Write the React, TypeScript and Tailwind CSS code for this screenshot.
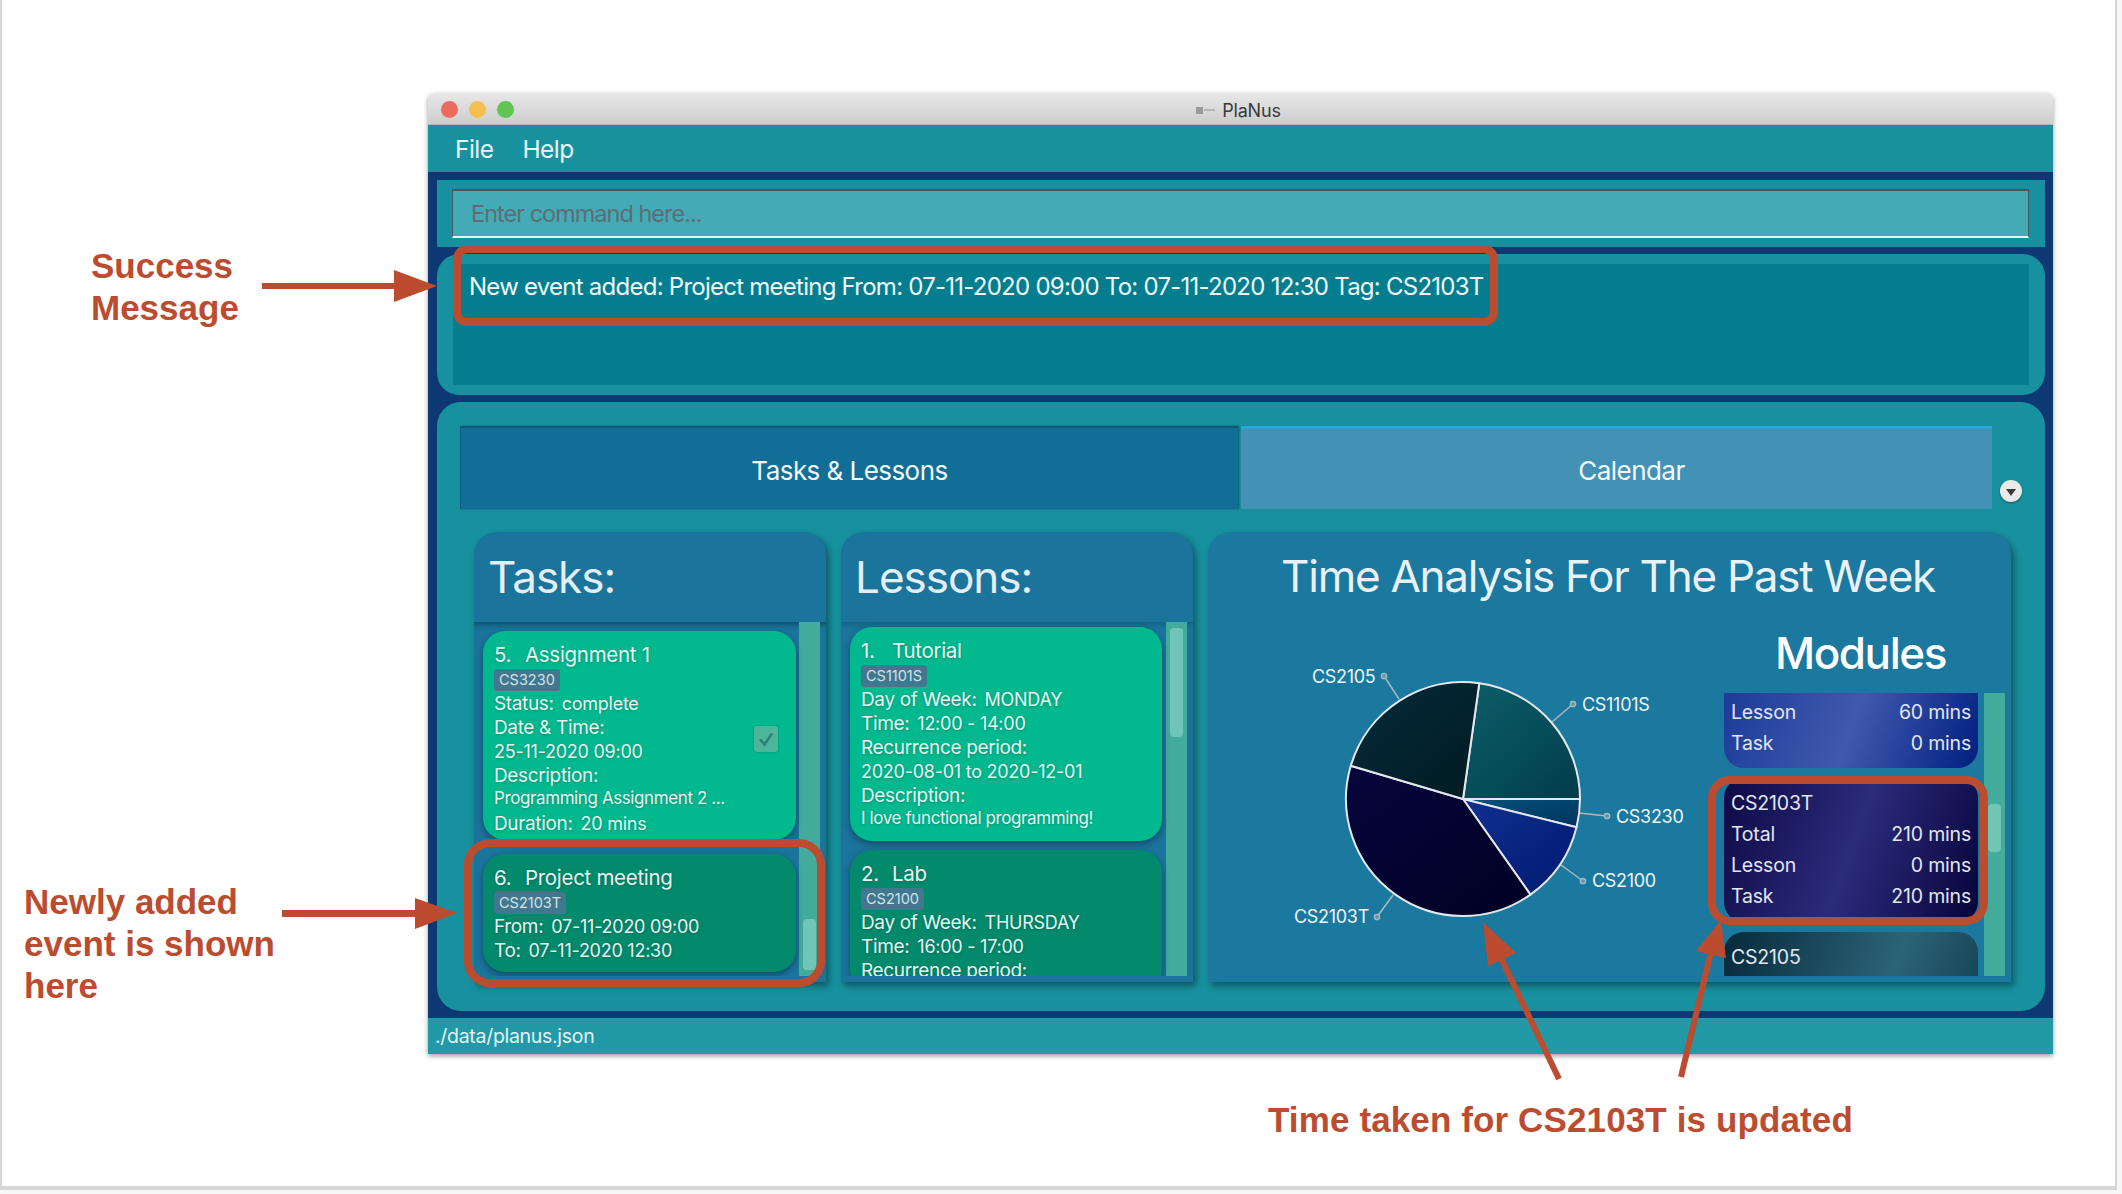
import React from "react";

const pieCx = 1462;
const pieCy = 799;
const pieR = 117;

const slices = [
  { id: "s1", from: 8, to: 90, c1: "#0b5f69", c2: "#023c4b" },
  { id: "s2", from: 90, to: 104, c1: "#05527f", c2: "#00345c" },
  { id: "s3", from: 104, to: 144.8, c1: "#10308f", c2: "#001970" },
  { id: "s4", from: 144.8, to: 286.5, c1: "#07063c", c2: "#000024" },
  { id: "s5", from: 286.5, to: 368, c1: "#052c3e", c2: "#011a20" },
];

const labels = [
  { text: "CS2105", x: 1311, y: 677, dot: [1383, 676], end: [1398, 699] },
  { text: "CS1101S", x: 1581, y: 705, dot: [1572, 704], end: [1551, 722] },
  { text: "CS3230", x: 1615, y: 817, dot: [1606, 816], end: [1578, 813] },
  { text: "CS2100", x: 1591, y: 881, dot: [1582, 881], end: [1560, 865] },
  { text: "CS2103T", x: 1293, y: 917, dot: [1376, 917], end: [1392, 895] },
];

const polar = (deg: number) => {
  const a = ((deg - 90) * Math.PI) / 180;
  return [pieCx + pieR * Math.cos(a), pieCy + pieR * Math.sin(a)];
};

const slicePath = (from: number, to: number) => {
  const [x1, y1] = polar(from);
  const [x2, y2] = polar(to);
  const large = to - from > 180 ? 1 : 0;
  return `M${pieCx} ${pieCy}L${x1} ${y1}A${pieR} ${pieR} 0 ${large} 1 ${x2} ${y2}Z`;
};

const PieChart = () => (
  <svg viewBox="1207 620 516 356" className="w-[516px] h-[356px] shrink-0">
    <defs>
      {slices.map((s) => (
        <linearGradient key={s.id} id={s.id} x1="0" y1="0" x2="1" y2="1">
          <stop offset="0" stopColor={s.c1} />
          <stop offset="1" stopColor={s.c2} />
        </linearGradient>
      ))}
    </defs>
    {labels.map((l) => (
      <g key={l.text}>
        <line x1={l.end[0]} y1={l.end[1]} x2={l.dot[0]} y2={l.dot[1]} stroke="#a9b8c0" strokeWidth="1.5" />
        <circle cx={l.dot[0]} cy={l.dot[1]} r="2.6" fill="#5d93a8" stroke="#a9b8c0" strokeWidth="1.5" />
        <text x={l.x} y={l.y + 6} fontSize="18" fill="#eef5f8" fontFamily="Inter, sans-serif" letterSpacing="-0.3">
          {l.text}
        </text>
      </g>
    ))}
    {slices.map((s) => (
      <path key={s.id} d={slicePath(s.from, s.to)} fill={`url(#${s.id})`} stroke="#e4e8ec" strokeWidth="2" strokeLinejoin="round" />
    ))}
  </svg>
);

const Tag = ({ text }: { text: string }) => (
  <div className="h-6 flex items-center pt-[1px]">
    <span className="h-[22px] px-[5px] flex items-center rounded-[3px] bg-[#41788f] text-[14.5px] text-[#d3e2e8] [text-shadow:none]">
      {text}
    </span>
  </div>
);

const Row = ({ label, value, small }: { label?: string; value?: string; small?: boolean }) => (
  <div className="h-6 flex items-center whitespace-nowrap">
    {label && <span className="mt-[2px] text-[19px] tracking-[-0.35px]">{label}</span>}
    {value && (
      <span className={(small ? "text-[17px] tracking-[-0.4px]" : "text-[18px] tracking-[-0.25px]") + (label ? " ml-[8px]" : "")}>
        {value}
      </span>
    )}
  </div>
);

const Card = ({ num, title, tag, dark, tight, children }: { num: string; title: string; tag: string; dark?: boolean; tight?: boolean; children: React.ReactNode }) => (
  <div
    className={
      "relative shrink-0 rounded-[22px] pt-[13px] pl-[11px] text-[#e6f6f1] [text-shadow:0_1px_3px_rgba(0,0,0,0.22)] shadow-[0_3px_7px_rgba(0,0,0,0.35)] " +
      (tight ? "pb-[5px] " : "pb-[10px] ") +
      (dark ? "bg-[#03896c]" : "bg-[#02b88f]")
    }
  >
    <div className="h-[23px] flex items-center text-[20.5px] tracking-[-0.3px] whitespace-nowrap">
      <span className="w-[31px]">{num}</span>
      <span>{title}</span>
    </div>
    <Tag text={tag} />
    {children}
  </div>
);

const Scrollbar = ({ thumbTop, thumbHeight }: { thumbTop: string; thumbHeight: string }) => (
  <div className={"w-[21px] shrink-0 bg-[#42ab9c] flex flex-col items-center " + thumbTop}>
    <div className={"w-[13px] rounded-[4px] bg-[#70c6b6] " + thumbHeight} />
  </div>
);

const ListPanel = ({ title, children }: { title: string; children: React.ReactNode }) => (
  <div className="w-[352px] shrink-0 flex flex-col rounded-t-[22px] bg-[#1a749c] shadow-[3px_4px_7px_rgba(0,0,0,0.4)] pb-[6px]">
    <div className="h-[90px] shrink-0 pt-[19px] pl-[14px] text-[44px] leading-[52px] text-[#e4eef5] tracking-[-1px]">{title}</div>
    {children}
  </div>
);

const ModuleRows = ({ rows }: { rows: [string, string][] }) => (
  <>
    {rows.map(([k, v]) => (
      <div key={k} className="flex justify-between h-[31px]">
        <span>{k}</span>
        <span>{v}</span>
      </div>
    ))}
  </>
);

const moduleText = "shrink-0 w-[254px] px-[7px] text-[19.5px] leading-[31px] text-[#e2e7f0] tracking-[-0.2px] ";

const App = () => {
  return (
    <div className="relative w-[2122px] h-[1194px] bg-[#f7f7f7] overflow-hidden [font-family:Inter,sans-serif]">
      <div className="w-[2117px] h-[1190px] bg-white border-l-2 border-r-2 border-b-4 border-[#d6d6d6] pl-[426px] pt-[93px]">
        {/* app window */}
        <div className="w-[1625px] h-[961px] flex flex-col rounded-t-[6px] overflow-hidden shadow-[0_2px_5px_rgba(0,0,0,0.4)]">
          <div className="relative h-[32px] shrink-0 flex items-center justify-center bg-gradient-to-b from-[#e8e8e8] to-[#cdcdcd] border-b border-[#b5b5b5]">
            <div className="absolute left-[13px] top-[8px] flex gap-[11px]">
              <div className="w-[17px] h-[17px] rounded-full bg-[#ed6a5e]" />
              <div className="w-[17px] h-[17px] rounded-full bg-[#f5bf4f]" />
              <div className="w-[17px] h-[17px] rounded-full bg-[#61c554]" />
            </div>
            <div className="flex items-center gap-[7px] text-[18px] text-[#3a3a3a] tracking-[-0.2px] ml-[-4px] mt-[3px]">
              <div className="flex items-center gap-[1px]">
                <div className="w-[7px] h-[7px] bg-[#9a9a9a]" />
                <div className="w-[11px] h-[2px] bg-[#b5b5b5]" />
              </div>
              PlaNus
            </div>
          </div>
          <div className="h-[47px] shrink-0 flex items-center gap-[29px] pl-[27px] pt-[2px] bg-[#18919f] text-[24.5px] text-[#e9f6f8] tracking-[-0.55px]">
            <span>File</span>
            <span>Help</span>
          </div>

          <div className="flex-1 flex flex-col bg-[#0d3872] pl-[9px] pr-2 pt-2 pb-[7px] gap-[7px]">
            {/* command box */}
            <div className="h-[67px] shrink-0 bg-[#17919f] pl-[15px] pr-4 pt-[9px]">
              <div className="h-[49px] flex items-center pl-[18px] bg-[#42abb5] border-t-2 border-l border-r border-[#44585f] border-b-2 border-b-[#e4f6f8] text-[23.5px] text-[#5f6d75] tracking-[-1px]">
                Enter command here...
              </div>
            </div>

            {/* result display */}
            <div className="h-[141px] shrink-0 rounded-[22px] bg-[#17919f] px-4 py-[10px]">
              <div className="h-[121px] bg-[#047e8f] pl-[16px] pt-[8px] text-[24px] leading-[30px] text-[#f0fafb] tracking-[-0.75px] whitespace-nowrap">
                New event added: Project meeting From: 07-11-2020 09:00 To: 07-11-2020 12:30 Tag: CS2103T
              </div>
            </div>

            {/* main panel */}
            <div className="flex-1 flex flex-col rounded-[24px] bg-[#17919f] pt-[24px]">
              <div className="flex pl-[23px] h-[83px] shrink-0">
                <div className="w-[778px] flex items-center justify-center pt-[3px] bg-[#116e96] border-t-2 border-l border-[#0c5a7c] shadow-[1px_0_2px_rgba(0,0,0,0.4)] text-[26px] text-[#f2f8fb] tracking-[-0.55px]">
                  Tasks &amp; Lessons
                </div>
                <div className="ml-[3px] w-[751px] flex items-center justify-center pl-[30px] pt-[3px] bg-[#4392b5] border-t-[3px] border-[#2aa5dc] text-[26px] text-[#f2f8fb] tracking-[-0.55px]">
                  Calendar
                </div>
                <div className="ml-[8px] mt-[54px] w-[22px] h-[22px] rounded-full bg-[#e9eaea] shadow-[0_1px_2px_rgba(0,0,0,0.4)] flex items-center justify-center">
                  <div className="w-0 h-0 mt-[2px] border-x-[5px] border-x-transparent border-t-[7px] border-t-[#3b3b3b]" />
                </div>
              </div>

              <div className="flex pl-[37px] pt-[23px] gap-[15px]">
                <ListPanel title="Tasks:">
                  <div className="h-[354px] flex overflow-hidden shadow-[inset_0_7px_6px_-5px_rgba(0,0,0,0.4)]">
                    <div className="w-[325px] shrink-0 pl-[9px] pr-[3px] pt-[9px] flex flex-col gap-[14px]">
                      <Card num="5." title="Assignment 1" tag="CS3230" tight>
                        <Row label="Status:" value="complete" />
                        <Row label="Date & Time:" />
                        <Row value="25-11-2020 09:00" />
                        <Row label="Description:" />
                        <Row value="Programming Assignment 2 ..." small />
                        <Row label="Duration:" value="20 mins" />
                        <div className="absolute left-[271px] top-[95px] w-[24px] h-[26px] rounded-[3px] bg-[#4db59b] shadow-[0_0_2px_rgba(0,0,0,0.3)] flex items-center justify-center">
                          <svg viewBox="0 0 24 26" className="w-[24px] h-[26px]">
                            <path d="M6 13.5l4.5 5L18 7.5" fill="none" stroke="#2b7f78" strokeWidth="2.4" />
                          </svg>
                        </div>
                      </Card>
                      <Card num="6." title="Project meeting" tag="CS2103T" dark>
                        <Row label="From:" value="07-11-2020 09:00" />
                        <Row label="To:" value="07-11-2020 12:30" />
                      </Card>
                    </div>
                    <Scrollbar thumbTop="pt-[297px]" thumbHeight="h-[51px]" />
                  </div>
                </ListPanel>

                <ListPanel title="Lessons:">
                  <div className="h-[354px] flex overflow-hidden shadow-[inset_0_7px_6px_-5px_rgba(0,0,0,0.2)]">
                    <div className="w-[325px] shrink-0 pl-[9px] pr-[4px] pt-[5px] flex flex-col gap-[9px]">
                      <Card num="1." title="Tutorial" tag="CS1101S">
                        <Row label="Day of Week:" value="MONDAY" />
                        <Row label="Time:" value="12:00 - 14:00" />
                        <Row label="Recurrence period:" />
                        <Row value="2020-08-01 to 2020-12-01" />
                        <Row label="Description:" />
                        <Row value="I love functional programming!" small />
                      </Card>
                      <Card num="2." title="Lab" tag="CS2100" dark>
                        <Row label="Day of Week:" value="THURSDAY" />
                        <Row label="Time:" value="16:00 - 17:00" />
                        <Row label="Recurrence period:" />
                      </Card>
                    </div>
                    <Scrollbar thumbTop="pt-[6px]" thumbHeight="h-[109px]" />
                  </div>
                </ListPanel>

                {/* time analysis */}
                <div className="w-[803px] h-[450px] shrink-0 flex flex-col rounded-t-[22px] bg-[#1b789e] shadow-[3px_4px_7px_rgba(0,0,0,0.4)] pb-[6px]">
                  <div className="h-[88px] shrink-0 pt-[18px] text-center text-[44px] leading-[52px] text-[#e8f1f6] tracking-[-1.27px] pr-[3px]">
                    Time Analysis For The Past Week
                  </div>
                  <div className="flex flex-1 min-h-0">
                    <PieChart />
                    <div className="w-[281px] flex flex-col">
                      <div className="h-[73px] shrink-0 text-center text-[44px] leading-[66px] font-medium text-white tracking-[-1.4px] pr-[8px]">Modules</div>
                      <div className="h-[283px] flex overflow-hidden">
                        <div className="w-[260px] shrink-0 flex flex-col gap-[10px]">
                          {/* list is scrolled, so the first card only shows its last rows */}
                          <div className={moduleText + "h-[75px] pt-[4px] rounded-b-[20px] bg-[linear-gradient(110deg,#1c3c98,#4059ae_50%,#001f80)]"}>
                            <ModuleRows rows={[["Lesson", "60 mins"], ["Task", "0 mins"]]} />
                          </div>
                          <div className={moduleText + "h-[144px] pt-[10px] rounded-[20px] bg-[linear-gradient(110deg,#0c0a45,#2b2b7b_50%,#06043a)]"}>
                            <div className="h-[31px]">CS2103T</div>
                            <ModuleRows rows={[["Total", "210 mins"], ["Lesson", "0 mins"], ["Task", "210 mins"]]} />
                          </div>
                          <div className={moduleText + "h-[144px] pt-[10px] rounded-[20px] bg-[linear-gradient(110deg,#062a3a,#2c6378_60%,#0f3a4a)]"}>
                            <div className="h-[31px]">CS2105</div>
                          </div>
                        </div>
                        <Scrollbar thumbTop="pt-[111px]" thumbHeight="h-[48px]" />
                      </div>
                    </div>
                  </div>
                </div>
              </div>
            </div>
          </div>

          <div className="h-[36px] shrink-0 flex items-center pl-[7px] pt-[2px] bg-[#2299a6] text-[19.5px] text-[#e2f4f6] tracking-[-0.3px]">
            ./data/planus.json
          </div>
        </div>
      </div>

      {/* annotations drawn over the slide */}
      <div className="absolute left-[91px] top-[245px] text-[35px] leading-[42px] font-bold text-[#bc4c30] [font-family:'Liberation_Sans',sans-serif]">
        Success
        <br />
        Message
      </div>
      <div className="absolute left-[24px] top-[881px] text-[35px] leading-[42px] font-bold text-[#bc4c30] [font-family:'Liberation_Sans',sans-serif]">
        Newly added
        <br />
        event is shown
        <br />
        here
      </div>
      <div className="absolute left-[1268px] top-[1099px] text-[35px] leading-[42px] font-bold text-[#bc4c30] tracking-[0.12px] whitespace-nowrap [font-family:'Liberation_Sans',sans-serif]">
        Time taken for CS2103T is updated
      </div>

      <div className="absolute left-[453px] top-[245px] w-[1045px] h-[81px] rounded-[14px] border-[8px] border-[#bc4c30]" />
      <div className="absolute left-[464px] top-[839px] w-[361px] h-[148px] rounded-[26px] border-[8px] border-[#bc4c30]" />
      <div className="absolute left-[1708px] top-[776px] w-[280px] h-[149px] rounded-[22px] border-[8px] border-[#bc4c30]" />

      <svg viewBox="0 0 2122 1194" className="absolute left-0 top-0 w-[2122px] h-[1194px] pointer-events-none">
        <g fill="#bc4c30" stroke="none">
          <rect x="262" y="283" width="134" height="6" />
          <polygon points="394,270 437,286 394,302" />
          <rect x="282" y="910" width="134" height="7" />
          <polygon points="415,898 457,913 415,929" />
          <polygon points="1483,922 1516,953 1488,966" />
          <polygon points="1721,920 1726,958 1696,951" />
        </g>
        <line x1="1559" y1="1079" x2="1501" y2="958" stroke="#bc4c30" strokeWidth="6" />
        <line x1="1681" y1="1077" x2="1711" y2="952" stroke="#bc4c30" strokeWidth="6" />
      </svg>
    </div>
  );
};

export default App;
